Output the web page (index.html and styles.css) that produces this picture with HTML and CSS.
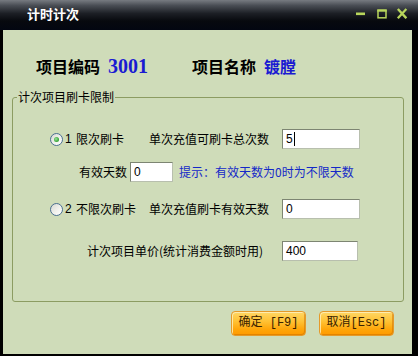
FILE: index.html
```html
<!DOCTYPE html>
<html lang="zh-CN">
<head>
<meta charset="utf-8">
<title>计时计次</title>
<link rel="stylesheet" href="styles.css">
</head>
<body>
<div class="window">
  <div class="titlebar">
    <span class="title">计时计次</span>
    <svg class="controls" width="54" height="14" viewBox="0 0 54 14" aria-hidden="true">
      <rect x="1" y="5.5" width="9" height="2.6" fill="#b8d65c"/>
      <rect x="23" y="3.2" width="8" height="7.6" fill="none" stroke="#b8d65c" stroke-width="1.5"/>
      <rect x="22.3" y="2.5" width="9.4" height="2.2" fill="#b8d65c"/>
      <path d="M43.6 2.8 L50.6 10.4 M50.6 2.8 L43.6 10.4" stroke="#b8d65c" stroke-width="2.3" stroke-linecap="square"/>
    </svg>
  </div>
  <div class="client">
    <div class="header">
      <span class="lbl">项目编码</span><span class="code">3001</span>
      <span class="lbl lbl2">项目名称</span><span class="name">镀膛</span>
    </div>
    <fieldset class="group">
      <legend>计次项目刷卡限制</legend>
      <div class="row row1">
        <span class="opt"><span class="radio checked"></span><span class="num">1</span><span>限次刷卡</span></span>
        <span class="label">单次充值可刷卡总次数</span>
        <div class="field wide">5<span class="caret"></span></div>
      </div>
      <div class="row row2">
        <span class="days">有效天数</span>
        <div class="field narrow">0</div>
        <span class="hint">提示：有效天数为0时为不限天数</span>
      </div>
      <div class="row row3">
        <span class="opt"><span class="radio"></span><span class="num">2</span><span>不限次刷卡</span></span>
        <span class="label">单次充值刷卡有效天数</span>
        <div class="field wide">0</div>
      </div>
      <div class="row row4">
        <span class="price">计次项目单价(统计消费金额时用)</span>
        <div class="field price-field">400</div>
      </div>
    </fieldset>
    <div class="buttons">
      <button class="btn">确定 [F9]</button>
      <button class="btn">取消[Esc]</button>
    </div>
  </div>
</div>
</body>
</html>
```
FILE: styles.css
```css
* { box-sizing: border-box; }
html, body { margin: 0; padding: 0; background: #000; }
body {
  font-family: "Liberation Sans", "Noto Sans CJK SC", sans-serif;
  font-size: 12px;
  color: #000;
}
.window {
  width: 418px;
  height: 356px;
  background: #000;
  display: flex;
  flex-direction: column;
}
.titlebar {
  height: 30px;
  flex: none;
  display: flex;
  align-items: center;
  padding: 0 9px 2px 27px;
  background: linear-gradient(#777b81 0%, #4a4e55 18%, #1c1f25 45%, #07090e 70%, #030611 100%);
}
.title {
  font-family: "Noto Sans CJK SC", sans-serif;
  font-weight: bold;
  font-size: 13px;
  color: #fff;
  line-height: 16px;
}
.controls { margin-left: auto; display: block; }
.client {
  flex: none;
  height: 324px;
  margin: 0 6px 0 3px;
  background: #cfdcb9;
  display: flex;
  flex-direction: column;
}
.header {
  margin-top: 26px;
  height: 20px;
  display: flex;
  align-items: center;
  padding-left: 33px;
  font-family: "Noto Sans CJK SC", sans-serif;
  font-size: 16px;
  font-weight: bold;
  line-height: 20px;
}
.code {
  font-family: "Liberation Serif", serif;
  font-size: 20px;
  font-weight: bold;
  color: #1a1ad2;
  margin-left: 8px;
}
.lbl2 { margin-left: 44px; }
.name { color: #1a1ad2; margin-left: 8px; }
.group {
  margin: 14px 8px 0 9px;
  padding: 25px 0 40px 0;
  border: 1px solid #8c9c62;
  border-radius: 3px;
  min-width: 0;
}
.group legend {
  font-family: "Noto Sans CJK SC", sans-serif;
  font-size: 12px;
  line-height: 14px;
  padding: 0 1px;
  margin-left: 4px;
}
.row {
  display: flex;
  align-items: center;
  height: 20px;
  font-family: "Noto Sans CJK SC", sans-serif;
  line-height: 14px;
}
.row2 { margin-top: 13px; padding-left: 66px; }
.row3 { margin-top: 17px; }
.row4 { margin-top: 22px; padding-left: 74px; }
.opt {
  display: flex;
  align-items: center;
  width: 136px;
  padding-left: 37px;
  flex: none;
}
.radio {
  width: 13px;
  height: 13px;
  border: 1px solid #4a6f90;
  border-radius: 50%;
  background: linear-gradient(135deg, #d8d9d2 0%, #f3f3ef 60%, #ffffff 100%);
  position: relative;
  flex: none;
}
.radio.checked::after {
  content: "";
  position: absolute;
  left: 3px;
  top: 3px;
  width: 5px;
  height: 5px;
  border-radius: 50%;
  background: radial-gradient(circle at 40% 40%, #9be39b 0%, #3eaa3e 60%, #208a20 100%);
}
.num {
  font-family: "Liberation Sans", sans-serif;
  width: 13px;
  padding-left: 2px;
  flex: none;
}
.label { width: 133px; flex: none; }
.days { width: 51px; flex: none; }
.field {
  height: 20px;
  background: #fff;
  border: 1px solid #7d8572;
  border-bottom-color: #b8bfae;
  border-right-color: #b8bfae;
  font-family: "Liberation Sans", sans-serif;
  font-size: 12px;
  line-height: 18px;
  padding-left: 3px;
  display: flex;
  align-items: center;
  flex: none;
}
.wide { width: 78px; }
.narrow { width: 43px; }
.price { width: 195px; flex: none; }
.price-field { width: 76px; }
.caret {
  display: inline-block;
  width: 1px;
  height: 14px;
  background: #000;
  margin-left: 1px;
}
.hint { color: #1428c8; margin-left: 6px; }
.buttons {
  display: flex;
  justify-content: flex-end;
  gap: 13px;
  margin-top: 9px;
  padding-right: 18px;
}
.btn {
  width: 75px;
  height: 25px;
  padding: 0;
  border: 1px solid #e59a2a;
  border-radius: 4px;
  background: linear-gradient(#ffd765 0%, #ffc235 40%, #ffa60a 75%, #ff9a00 100%);
  box-shadow: inset 1px 1px 0 rgba(255,240,190,0.8), inset -1px -1px 0 rgba(200,110,0,0.5);
  font-family: "Liberation Mono", "Noto Sans CJK SC", monospace;
  font-size: 12px;
  color: #3a2200;
  line-height: 23px;
}
```
